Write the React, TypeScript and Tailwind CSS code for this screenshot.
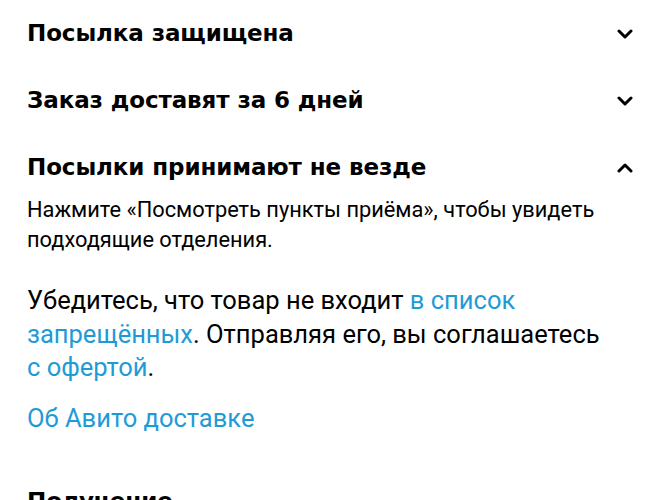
const sections = [
  { title: 'Посылка защищена', open: false },
  { title: 'Заказ доставят за 6 дней', open: false },
  { title: 'Посылки принимают не везде', open: true },
];

function Chevron({ open }: { open: boolean }) {
  return (
    <svg width="16" height="10" viewBox="0 0 16 10" className="shrink-0">
      <polyline
        points={open ? '2,8 8,2 14,8' : '2,2 8,8 14,2'}
        fill="none"
        stroke="black"
        strokeWidth="3"
        strokeLinecap="round"
        strokeLinejoin="round"
      />
    </svg>
  );
}

export default function App() {
  return (
    <div className="w-[659px] h-[500px] overflow-hidden bg-white pl-[27px] pr-[26px] font-['Roboto',sans-serif] text-black">
      {sections.map((s) => (
        <div key={s.title} className="h-[67px] flex items-center justify-between">
          <h3 className="font-['DejaVu_Sans',sans-serif] font-bold text-[23px] tracking-[-0.1px]">{s.title}</h3>
          <Chevron open={s.open} />
        </div>
      ))}

      {/* Open section body */}
      <p className="-mt-[6px] text-[21.8px] leading-[30px] pr-[14px]">
        Нажмите «Посмотреть пункты приёма», чтобы увидеть подходящие отделения.
      </p>

      <p className="mt-[29px] text-[25.5px] leading-[33.5px] pr-[20px]">
        Убедитесь, что товар не входит <a className="text-[#1e9bd7]">в&nbsp;список запрещённых</a>. Отправляя
        его, вы соглашаетесь <a className="text-[#1e9bd7]">с&nbsp;офертой</a>.
      </p>

      <a className="block mt-[17px] text-[25.5px] leading-[33.5px] text-[#1e9bd7]">Об Авито доставке</a>

      <h3 className="mt-[51px] font-['DejaVu_Sans',sans-serif] font-bold text-[23px] leading-[30px]">Получение</h3>
    </div>
  );
}
